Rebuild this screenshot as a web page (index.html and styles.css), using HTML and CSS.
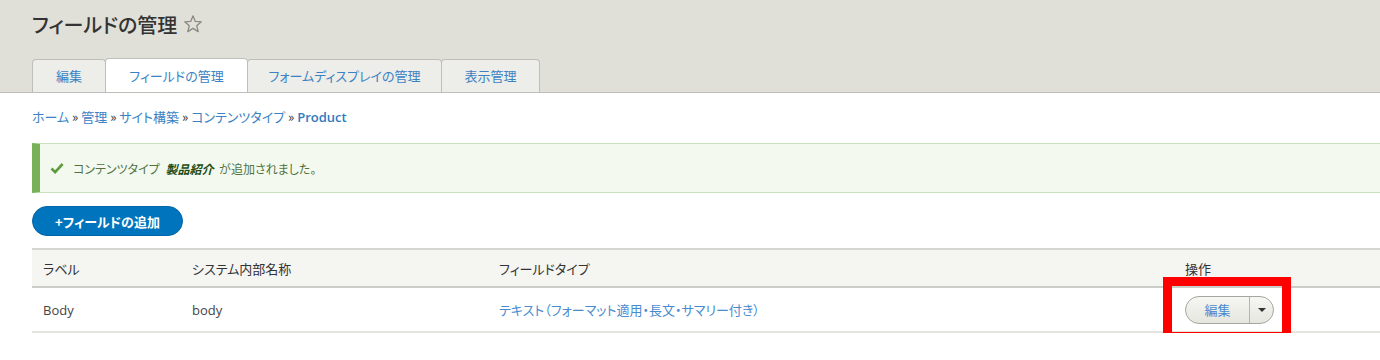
FILE: index.html
```html
<!DOCTYPE html>
<html lang="ja">
<head>
    <meta charset="UTF-8">
    <title>フィールドの管理</title>
    <link rel="stylesheet" href="styles.css">
</head>
<body>
    <div class="header">
        <h1 class="page-title">フィールドの管理
            <svg class="star" width="20" height="20" viewBox="0 0 20 20"><path d="M10 1.8l2.3 5.6 6 .4-4.6 3.9 1.5 5.9L10 14.4l-5.2 3.2 1.5-5.9L1.7 7.8l6-.4z" fill="none" stroke="#8a8a83" stroke-width="1.3" stroke-linejoin="round"/></svg>
        </h1>
        <ul class="tabs">
            <li class="tab"><a href="#">編集</a></li>
            <li class="tab active"><a href="#">フィールドの管理</a></li>
            <li class="tab"><a href="#">フォームディスプレイの管理</a></li>
            <li class="tab"><a href="#">表示管理</a></li>
        </ul>
    </div>

    <div class="content">
        <div class="breadcrumb">
            <a href="#">ホーム</a> » <a href="#">管理</a> » <a href="#">サイト構築</a> » <a href="#">コンテンツタイプ</a> » <a href="#" class="latin">Product</a>
        </div>

        <div class="message">
            <svg class="check" width="14" height="12" viewBox="0 0 14 12"><path d="M1.5 6.5l3.6 3.6L12.6 2" fill="none" stroke="#5d9b3c" stroke-width="2.6"/></svg>
            <span>コンテンツタイプ <em>製品紹介</em> が追加されました。</span>
        </div>

        <a href="#" class="add-button">+フィールドの追加</a>

        <table class="fields">
            <thead>
                <tr>
                    <th class="col-label">ラベル</th>
                    <th class="col-name">システム内部名称</th>
                    <th class="col-type">フィールドタイプ</th>
                    <th>操作</th>
                </tr>
            </thead>
            <tbody>
                <tr>
                    <td class="latin">Body</td>
                    <td class="latin">body</td>
                    <td><a href="#">テキスト（フォーマット適用・長文・サマリー付き）</a></td>
                    <td>
                        <div class="dropbutton-wrap">
                            <div class="dropbutton">
                                <a href="#" class="drop-main">編集</a>
                                <span class="drop-toggle"><span class="arrow"></span></span>
                            </div>
                            <div class="highlight"></div>
                        </div>
                    </td>
                </tr>
            </tbody>
        </table>
    </div>
</body>
</html>
```

FILE: styles.css
```css
body {
    margin: 0;
    font-family: "Noto Sans CJK JP", "Noto Sans", sans-serif;
    font-feature-settings: "palt";
    font-size: 13px;
    color: #333;
    background: #fff;
}
a {
    color: #0074bd;
    text-decoration: none;
}
.latin {
    font-family: "Open Sans", "Noto Sans CJK JP", sans-serif;
}
.header {
    background: #e0e0d8;
    border-bottom: 1px solid #bebeb8;
    padding: 10px 0 0 32px;
    height: 82px;
    box-sizing: content-box;
}
.page-title {
    margin: 0;
    font-size: 20px;
    font-weight: 500;
    line-height: 30px;
    color: #333;
    display: flex;
    align-items: center;
    gap: 6px;
}
.star {
    margin-top: -2px;
}
.tabs {
    list-style: none;
    margin: 19px 0 0 0;
    padding: 0;
    display: flex;
}
.tab {
    background: #ededea;
    border: 1px solid #bfbfba;
    border-bottom: none;
    border-radius: 4px 4px 0 0;
    height: 32px;
    margin-right: -1px;
}
.tab a {
    display: block;
    line-height: 32px;
    text-align: center;
    color: #3b82c4;
    font-size: 13px;
}
.tab:nth-child(1) { width: 72px; }
.tab:nth-child(2) { width: 141px; }
.tab:nth-child(3) { width: 193px; }
.tab:nth-child(4) { width: 97px; }
.tab.active {
    background: #fff;
    height: 33px;
    margin-top: -1px;
    position: relative;
    z-index: 1;
}
.tab.active a {
    line-height: 34px;
}
.content {
    padding: 14px 0 0 32px;
}
.breadcrumb {
    line-height: 20px;
    color: #333;
    font-size: 13px;
}
.breadcrumb a {
    color: #3b82c4;
}
.breadcrumb .latin {
    font-weight: 600;
    color: #2f7ac0;
}
.message {
    margin-top: 16px;
    height: 48px;
    display: flex;
    align-items: center;
    background: #f3f9ef;
    border: 1px solid #c9e1bd;
    border-left: 8px solid #77b259;
    border-right: none;
    padding-left: 10px;
    color: #52733f;
    font-size: 12px;
}
.check {
    margin-right: 9px;
}
.message em {
    font-weight: bold;
    color: #234c12;
    margin: 0 3px;
}
.add-button {
    display: inline-block;
    margin-top: 13px;
    width: 151px;
    height: 30px;
    line-height: 30px;
    background: #0074bd;
    border: 1px solid #0066a8;
    box-sizing: border-box;
    border-radius: 20px;
    color: #fff;
    font-weight: bold;
    text-align: center;
    font-size: 13px;
}
.fields {
    margin-top: 12px;
    width: 100%;
    border-collapse: collapse;
}
.fields th {
    background: #f5f5f2;
    border-top: 2px solid #d6d6d1;
    border-bottom: 2px solid #cdcdc8;
    height: 36px;
    text-align: left;
    font-weight: normal;
    padding: 0 11px;
    color: #333;
}
.fields td {
    height: 43px;
    border-bottom: 2px solid #e6e4df;
    padding: 0 11px;
    color: #444;
}
.fields td a {
    color: #4a8bd0;
}
.col-label { width: 127px; }
.col-name { width: 285px; }
.col-type { width: 664px; }
.dropbutton-wrap {
    position: relative;
    display: inline-block;
    vertical-align: middle;
}
.dropbutton {
    display: flex;
    width: 89px;
    height: 28px;
    border: 1px solid #a6a6a0;
    border-radius: 15px;
    box-sizing: border-box;
    background: linear-gradient(#f6f6f3, #e6e6df);
    overflow: hidden;
}
.drop-main {
    width: 63px;
    line-height: 26px;
    text-align: center;
    color: #333;
    border-right: 1px solid #b5b5af;
}
.drop-toggle {
    flex: 1;
    display: flex;
    align-items: center;
    justify-content: center;
}
.arrow {
    border-left: 4px solid transparent;
    border-right: 4px solid transparent;
    border-top: 4px solid #333;
    margin-top: 1px;
}
.highlight {
    position: absolute;
    left: -22px;
    top: -19px;
    width: 110px;
    height: 46px;
    border: 9px solid #ff0000;
}
```
